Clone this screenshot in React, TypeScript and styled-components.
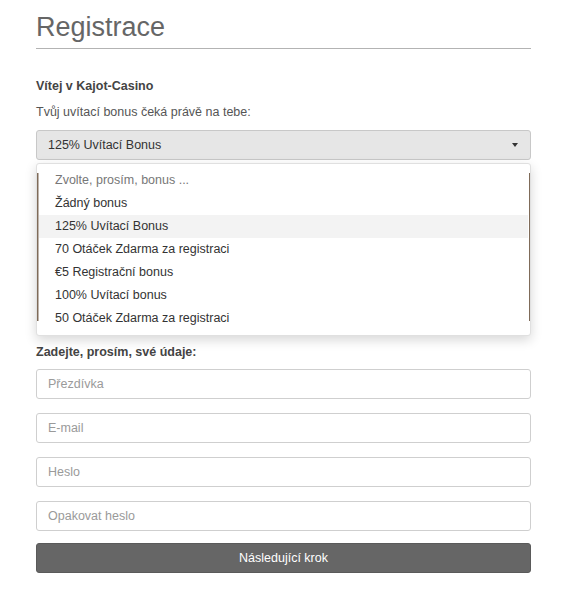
import React, { useState } from 'react';
import styled, { createGlobalStyle } from 'styled-components';

const bonuses = [
  '125% Uvítací Bonus',
  '70 Otáček Zdarma za registraci',
  '€5 Registrační bonus',
  '100% Uvítací bonus',
  '50 Otáček Zdarma za registraci',
];

const App = () => {
  const [selected, setSelected] = useState('125% Uvítací Bonus');
  const [open, setOpen] = useState(true);

  return (
    <Page>
      <GlobalStyle />
      <Title>Registrace</Title>
      <Welcome>Vítej v Kajot-Casino</Welcome>
      <Lead>Tvůj uvítací bonus čeká právě na tebe:</Lead>

      <SelectWrap>
        <SelectBox onClick={() => setOpen(!open)}>
          {selected}
          <Caret />
        </SelectBox>
        {open && (
          <Menu>
            <MenuItem muted>Zvolte, prosím, bonus ...</MenuItem>
            <MenuItem onClick={() => setSelected('Žádný bonus')}>Žádný bonus</MenuItem>
            {bonuses.map((b) => (
              <MenuItem key={b} active={b === selected} onClick={() => setSelected(b)}>
                {b}
              </MenuItem>
            ))}
          </Menu>
        )}
      </SelectWrap>

      <BonusBanner />

      <SectionLabel>Zadejte, prosím, své údaje:</SectionLabel>
      <Fields>
        <Input placeholder="Přezdívka" />
        <Input placeholder="E-mail" type="email" />
        <Input placeholder="Heslo" type="password" />
        <Input placeholder="Opakovat heslo" type="password" />
        <NextButton>Následující krok</NextButton>
      </Fields>
    </Page>
  );
};

const GlobalStyle = createGlobalStyle`
  html, body {
    margin: 0;
    padding: 0;
    background: #fff;
  }
  body {
    font-family: "Liberation Sans", Arial, sans-serif;
    color: #555;
  }
  * {
    box-sizing: border-box;
  }
`;

const Page = styled.div`
  width: 495px;
  margin-left: 36px;
  padding-bottom: 27px;
`;

const Title = styled.h1`
  margin: 11px 0 0;
  padding-bottom: 4px;
  border-bottom: 1px solid #b3b3b3;
  font-size: 27px;
  line-height: 33px;
  font-weight: normal;
  color: #666;
`;

const Welcome = styled.div`
  margin-top: 28px;
  font-size: 12.5px;
  line-height: 18px;
  font-weight: bold;
  color: #444;
`;

const Lead = styled.p`
  margin: 8px 0 0;
  font-size: 12.5px;
  line-height: 18px;
  color: #555;
`;

const SelectWrap = styled.div`
  position: relative;
  margin-top: 9px;
  z-index: 2;
`;

const SelectBox = styled.div`
  display: flex;
  align-items: center;
  justify-content: space-between;
  height: 30px;
  padding: 0 11px;
  background: #e6e6e6;
  border: 1px solid #c8c8c8;
  border-radius: 3px;
  font-size: 12.5px;
  color: #333;
  cursor: pointer;
`;

const Caret = styled.span`
  width: 0;
  height: 0;
  margin-right: 1px;
  border-left: 3.5px solid transparent;
  border-right: 3.5px solid transparent;
  border-top: 4px solid #333;
`;

const Menu = styled.div`
  position: absolute;
  top: 33px;
  left: 0;
  right: 0;
  padding: 5px 0;
  border: 1px solid #e0e0e0;
  border-radius: 3px;
  background:
    linear-gradient(#7f6b59, #7f6b59) left 0 top 9px / 1.5px 148px no-repeat,
    linear-gradient(#7f6b59, #7f6b59) right 0 top 9px / 1.5px 148px no-repeat,
    #fff;
  box-shadow: 0 4px 12px rgba(0, 0, 0, 0.16);
`;

const MenuItem = styled.div<{ active?: boolean; muted?: boolean }>`
  height: 23px;
  margin: 0 2px;
  line-height: 23px;
  padding-left: 16px;
  font-size: 12.5px;
  color: ${(p) => (p.muted ? '#777' : '#333')};
  background: ${(p) => (p.active ? '#f3f3f3' : 'transparent')};
  cursor: pointer;
`;

const BonusBanner = styled.div`
  height: 147px;
  margin-top: 13px;
  background: #7a6756;
  border-radius: 2px;
`;

const SectionLabel = styled.div`
  margin-top: 23px;
  font-size: 12.5px;
  line-height: 18px;
  font-weight: bold;
  color: #444;
`;

const Fields = styled.div`
  display: flex;
  flex-direction: column;
  gap: 14px;
  margin-top: 8px;
`;

const Input = styled.input`
  height: 30px;
  padding: 0 11px;
  border: 1px solid #cfcfcf;
  border-radius: 3px;
  font-family: inherit;
  font-size: 12.5px;
  color: #333;
  outline: none;

  &::placeholder {
    color: #9a9a9a;
  }
`;

const NextButton = styled.button`
  height: 30px;
  margin-top: -2px;
  background: #666;
  border: 1px solid #5a5a5a;
  border-radius: 3px;
  font-family: inherit;
  font-size: 12.5px;
  color: #fff;
  cursor: pointer;
`;

export default App;
